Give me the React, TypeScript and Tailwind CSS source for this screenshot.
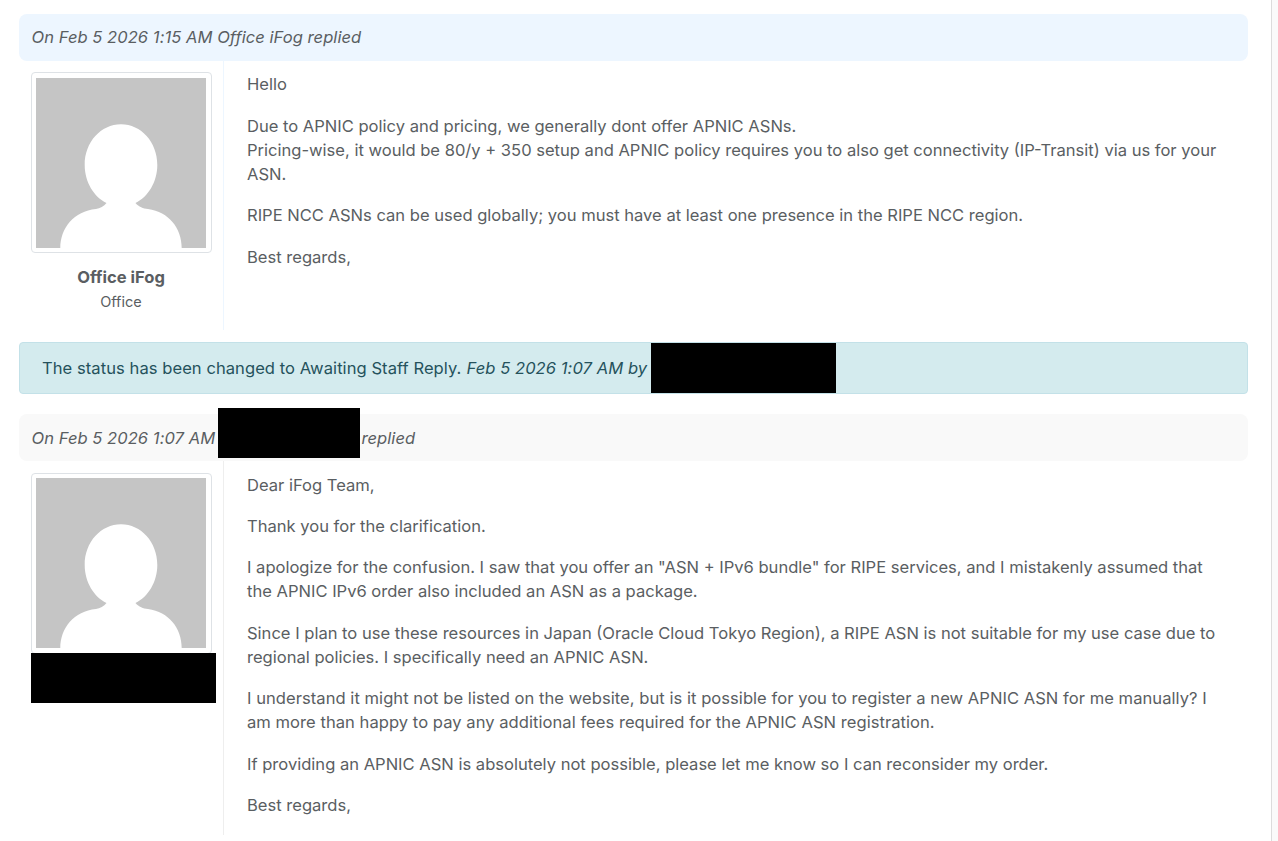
import React from "react";

type ReplyProps = {
	header: React.ReactNode;
	headerClass: string;
	dividerClass: string;
	avatarClass: string;
	author: React.ReactNode;
	children: React.ReactNode;
	bodyClass: string;
	textClass: string;
};

// Default grey avatar with a white silhouette
const Avatar: React.FC<{ className: string }> = ({ className }) => (
	<div className={`w-[181px] h-[181px] rounded border border-[#dee2e6] bg-white px-1 ${className}`}>
		<svg viewBox="0 0 170 170" className="block w-[170px] h-[170px]" aria-hidden="true">
			<rect width="170" height="170" fill="#c5c5c5" />
			<path
				d="M85 46.3 C105 46.3 121.3 64 121.3 87 C121.3 104 112 119 99.5 125 C103 129 107 130.5 112 131 C133 134 145.7 150 145.7 170 L24.3 170 C24.3 150 38 133 60 131 C64 130 68 128.5 70.5 125 C58 119 48.7 104 48.7 87 C48.7 64 65 46.3 85 46.3 Z"
				fill="#fff"
			/>
		</svg>
	</div>
);

const Reply: React.FC<ReplyProps> = ({
	header,
	headerClass,
	dividerClass,
	avatarClass,
	author,
	children,
	bodyClass,
	textClass,
}) => (
	<article>
		<header
			className={`flex h-[47px] items-center rounded-lg pl-[12.5px] italic tracking-[0.045px] whitespace-pre ${headerClass}`}
		>
			{header}
		</header>
		<div className={`flex ${bodyClass}`}>
			<div className={`w-[205px] shrink-0 border-r pl-3 ${dividerClass}`}>
				<Avatar className={avatarClass} />
				{author}
			</div>
			<div className={`flex flex-col pl-[23px] whitespace-nowrap ${textClass}`}>{children}</div>
		</div>
	</article>
);

const App: React.FC = () => {
	return (
		<div className="flex h-[841px] w-full overflow-hidden bg-[#fafafa] font-['Inter',sans-serif] text-[16.56px] leading-[24.1px] text-[#5a5e62]">
			<main className="w-[1272px] shrink-0 border-r border-[#dcdcdc] bg-white pt-[14px] pr-[23px] pl-[19px]">
				<Reply
					header="On Feb 5 2026 1:15 AM Office iFog replied"
					headerClass="bg-[#edf6ff]"
					dividerClass="border-[#edf6ff] pt-[11px]"
					avatarClass="pt-[5px]"
					bodyClass="h-[269px]"
					textClass="gap-[17.35px] pt-[11.4px]"
					author={
						<div className="w-[180px] pt-3 text-center">
							<div className="font-bold">Office iFog</div>
							<div className="pt-px text-[14.5px]">Office</div>
						</div>
					}
				>
					<p>Hello</p>
					<p>
						Due to APNIC policy and pricing, we generally dont offer APNIC ASNs.
						<br />
						Pricing-wise, it would be 80/y + 350 setup and APNIC policy requires you to also get connectivity (IP-Transit) via us for your
						<br />
						ASN.
					</p>
					<p>RIPE NCC ASNs can be used globally; you must have at least one presence in the RIPE NCC region.</p>
					<p>Best regards,</p>
				</Reply>

				{/* Status change notice */}
				<div className="mt-3 mb-5 flex h-[52px] items-center rounded border border-[#c3e1e8] bg-[#d4ebee] pl-[22px] whitespace-pre text-[#25525c]">
					<span className="w-[424.5px] tracking-[0.06px]">The status has been changed to Awaiting Staff Reply. </span>
					<em className="w-[184.5px] tracking-[0.06px]">Feb 5 2026 1:07 AM by</em>
					<span className="h-[50px] w-[185px] bg-black" />
				</div>

				<Reply
					header={
						<>
							<span className="w-[186px] pt-px">On Feb 5 2026 1:07 AM</span>
							<span className="-mt-[9px] mr-[2px] h-[50px] w-[142px] bg-black" />
							<span className="pt-px">replied</span>
						</>
					}
					headerClass="bg-[#f9f9f9]"
					dividerClass="border-[#eeeeee] pt-3"
					avatarClass="pt-1"
					bodyClass="h-[374px]"
					textClass="gap-[17.3px] pt-[11.6px]"
					author={<div className="relative -mt-px h-[50px] w-[185px] bg-black" />}
				>
					<p>Dear iFog Team,</p>
					<p>Thank you for the clarification.</p>
					<p>
						I apologize for the confusion. I saw that you offer an "ASN + IPv6 bundle" for RIPE services, and I mistakenly assumed that
						<br />
						the APNIC IPv6 order also included an ASN as a package.
					</p>
					<p>
						Since I plan to use these resources in Japan (Oracle Cloud Tokyo Region), a RIPE ASN is not suitable for my use case due to
						<br />
						regional policies. I specifically need an APNIC ASN.
					</p>
					<p className="tracking-[0.045px]">
						I understand it might not be listed on the website, but is it possible for you to register a new APNIC ASN for me manually? I
						<br />
						am more than happy to pay any additional fees required for the APNIC ASN registration.
					</p>
					<p>If providing an APNIC ASN is absolutely not possible, please let me know so I can reconsider my order.</p>
					<p>Best regards,</p>
				</Reply>
			</main>
		</div>
	);
};

export default App;
